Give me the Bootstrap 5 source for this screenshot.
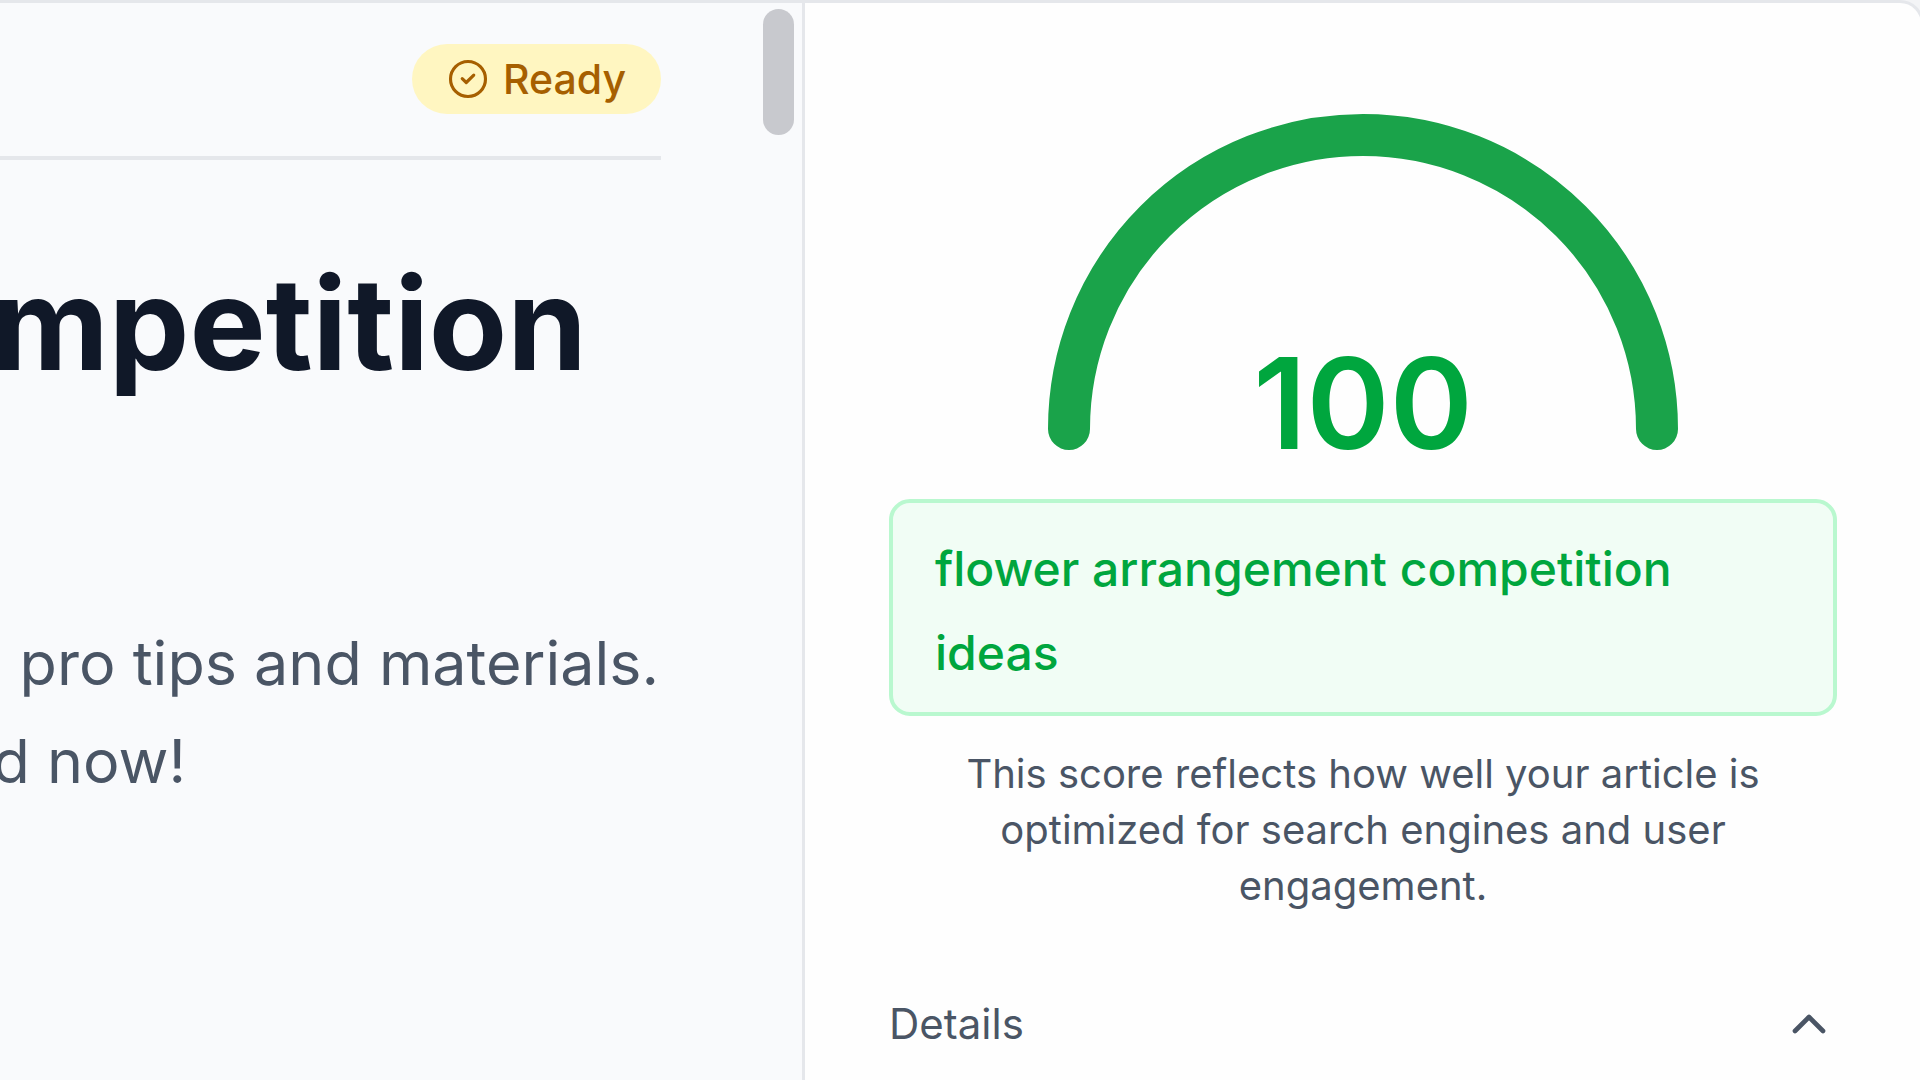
<!DOCTYPE html>
<html lang="en">
<head>
<meta charset="utf-8">
<meta name="viewport" content="width=device-width, initial-scale=1">
<title>Article score</title>
<link rel="stylesheet" href="https://cdn.jsdelivr.net/npm/bootstrap@5.3.0/dist/css/bootstrap.min.css">
<style>
body { font-family: Inter, "Noto Sans", sans-serif; background: #f3f4f6; color: #4a5565; }
.workspace { display: grid; grid-template-columns: 805fr 1116fr; margin-right: -4px; border-top: 3px solid #e5e7eb; border-right: 3px solid #e5e7eb; border-top-right-radius: 24px; background: #fefefe; }
.article-pane { background: #f9fafc; border-right: 3px solid #e5e7eb; }
.article-head { margin-right: 141px; padding: 41px 0 42px; border-bottom: 4px solid #e5e7eb; }
.status-pill { background: #fff6c1; color: #a65f00; font-size: 41px; line-height: 70px; font-weight: 500; gap: 14px; padding: 0 35px; }
.article-title { font-size: 128px; line-height: 140px; font-weight: 700; color: #101828; margin: 94px 215px 0 0; }
.article-intro { font-size: 61px; line-height: 98px; margin: 220px 143px 0 0; }
.intro-tail { margin-right: 473px; }
.scroll-thumb { width: 31px; height: 126px; top: 6px; right: 8px; background: #c8c9ce; }
.score-pane { padding: 111px 84px 0; }
.gauge { width: 630px; max-width: 100%; }
.gauge-value { bottom: 0; font-size: 126px; line-height: 94px; font-weight: 600; color: #00a63e; }
.keyword-box { margin-top: 49px; padding: 24px 42px 17px; border: 4px solid #b9f8cf; border-radius: 21px; background: #f1fdf5; color: #00a63e; font-size: 48px; line-height: 84px; font-weight: 500; }
.score-note { font-size: 40px; line-height: 56px; margin: 30px 0 0; padding: 0 56px; }
.details-toggle { margin-top: 82px; font-size: 42px; line-height: 56px; color: #4a5565; }
</style>
<script src="https://cdn.jsdelivr.net/npm/bootstrap@5.3.0/dist/js/bootstrap.bundle.min.js"></script>
</head>
<body class="overflow-hidden">
<div class="workspace min-vh-100 overflow-hidden">
  <main class="article-pane position-relative overflow-hidden">
    <div class="article-head d-flex justify-content-end">
      <span class="status-pill rounded-pill d-inline-flex align-items-center">
        <svg width="42" height="42" viewBox="0 0 24 24" fill="none" stroke="currentColor" stroke-width="1.8" stroke-linecap="round" stroke-linejoin="round" aria-hidden="true"><circle cx="12" cy="12" r="10"/><path d="M8.7 11.8 11 14l4.3-4.2"/></svg>
        Ready
      </span>
    </div>
    <h1 class="article-title d-flex justify-content-end text-nowrap">mpetition</h1>
    <p class="article-intro text-nowrap">
      <span class="d-flex justify-content-end">h pro tips and materials.</span>
      <span class="intro-tail d-flex justify-content-end">d now!</span>
    </p>
    <div class="scroll-thumb position-absolute rounded-pill"></div>
  </main>
  <aside class="score-pane">
    <div class="gauge position-relative mx-auto">
      <svg class="d-block w-100" viewBox="0 0 630 336" fill="none" aria-hidden="true"><path d="M21 315a294 294 0 0 1 588 0" stroke="#1aa34a" stroke-width="42" stroke-linecap="round"/></svg>
      <div class="gauge-value position-absolute start-0 end-0 text-center">100</div>
    </div>
    <div class="keyword-box">flower arrangement competition ideas</div>
    <p class="score-note text-center">This score reflects how well your article is optimized for search engines and user engagement.</p>
    <button type="button" class="details-toggle btn p-0 border-0 w-100 d-flex justify-content-between align-items-center" aria-expanded="true">
      Details
      <svg width="56" height="56" viewBox="0 0 24 24" fill="none" stroke="currentColor" stroke-width="2" stroke-linecap="round" stroke-linejoin="round" aria-hidden="true"><path d="m18 15-6-6-6 6"/></svg>
    </button>
  </aside>
</div>
</body>
</html>
